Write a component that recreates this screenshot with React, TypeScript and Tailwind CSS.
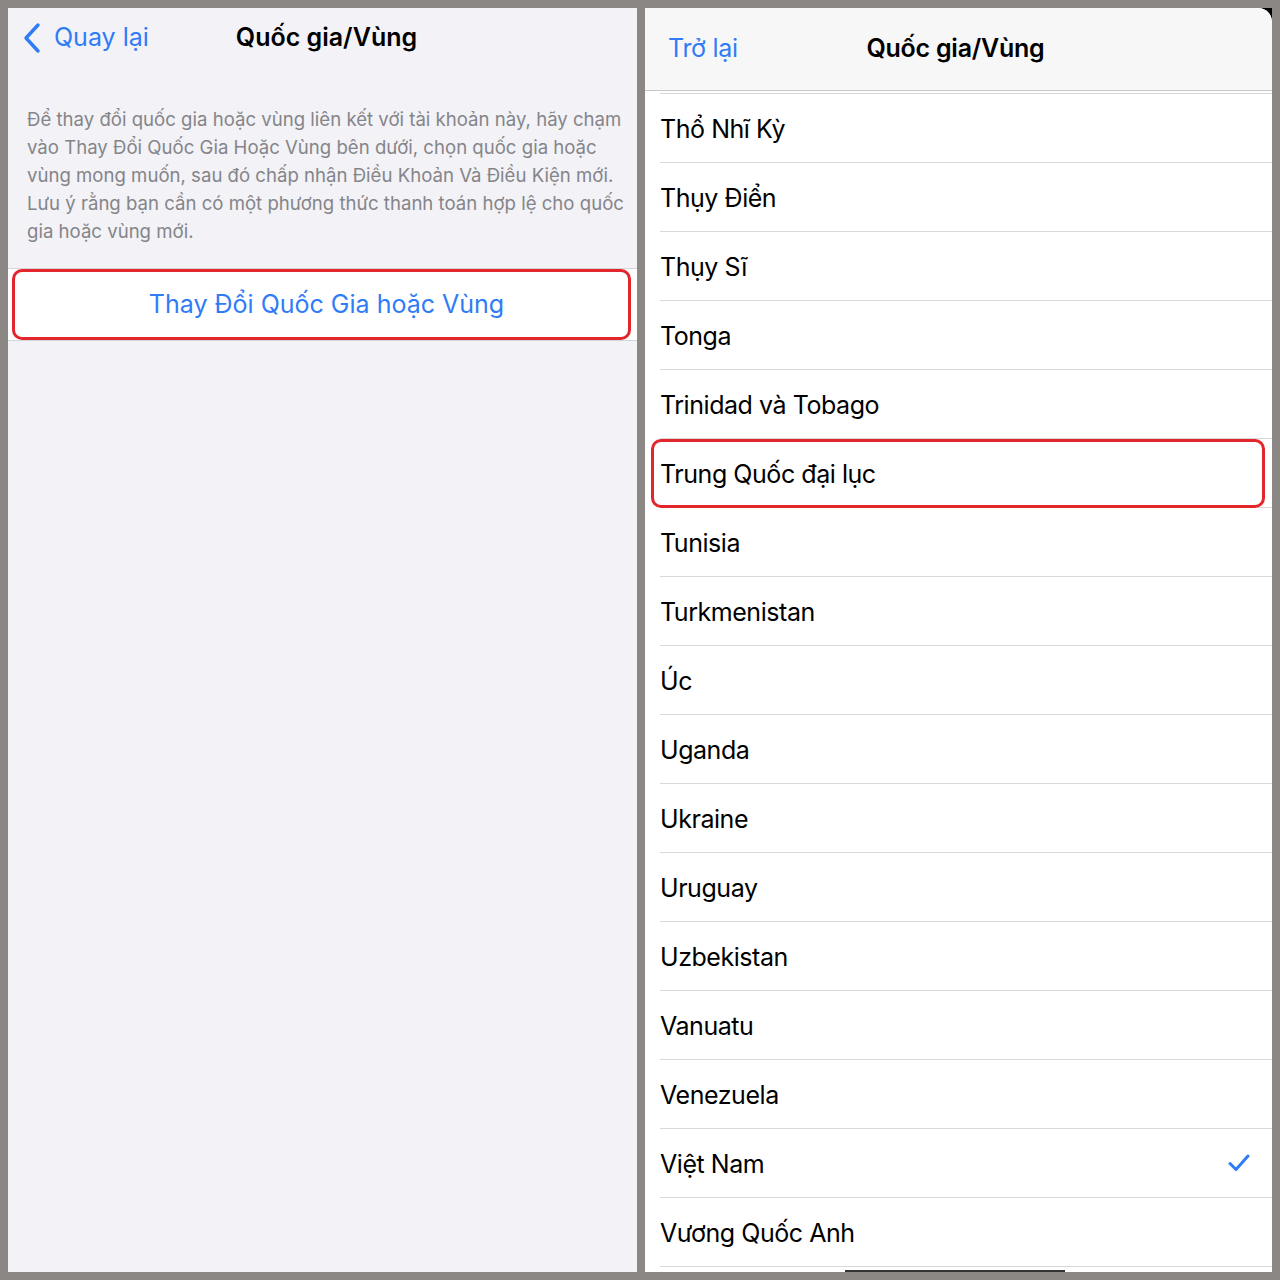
import React from "react";

const countries = [
  "Thổ Nhĩ Kỳ",
  "Thụy Điển",
  "Thụy Sĩ",
  "Tonga",
  "Trinidad và Tobago",
  "Trung Quốc đại lục",
  "Tunisia",
  "Turkmenistan",
  "Úc",
  "Uganda",
  "Ukraine",
  "Uruguay",
  "Uzbekistan",
  "Vanuatu",
  "Venezuela",
  "Việt Nam",
  "Vương Quốc Anh",
];

const font = { fontFamily: "Inter, 'Noto Sans', 'Liberation Sans', sans-serif" };

export default function App() {
  return (
    <div
      className="w-[1280px] h-[1280px] bg-[#8a8784] p-[8px] flex gap-[8px] overflow-hidden"
      style={font}
    >
      {/* Left panel */}
      <div className="w-[629px] h-[1264px] bg-[#f2f2f7] flex flex-col">
        <div className="h-[60px] flex items-center relative">
          <div className="flex items-center pl-[14px] gap-[10px] text-[#2f7cf6]">
            <svg width="22" height="32" viewBox="0 0 22 32" fill="none">
              <path d="M16 3 L4 16 L16 29" stroke="#2f7cf6" strokeWidth="3.4" strokeLinecap="round" strokeLinejoin="round" />
            </svg>
            <span className="text-[25px] tracking-[0px]">Quay lại</span>
          </div>
          <div className="absolute left-0 right-0 text-center pointer-events-none">
            <span className="text-[25px] font-semibold text-black tracking-[0px] pl-[8px]">Quốc gia/Vùng</span>
          </div>
        </div>
        <div className="pt-[37px] pl-[19px] pr-[4px] text-[18.6px] leading-[28px] text-[#858589]">
          <div className="whitespace-nowrap">Để thay đổi quốc gia hoặc vùng liên kết với tài khoản này, hãy chạm</div>
          <div className="whitespace-nowrap">vào Thay Đổi Quốc Gia Hoặc Vùng bên dưới, chọn quốc gia hoặc</div>
          <div className="whitespace-nowrap">vùng mong muốn, sau đó chấp nhận Điều Khoản Và Điều Kiện mới.</div>
          <div className="whitespace-nowrap">Lưu ý rằng bạn cần có một phương thức thanh toán hợp lệ cho quốc</div>
          <div className="whitespace-nowrap">gia hoặc vùng mới.</div>
        </div>
        <div className="mt-[23px] relative bg-white border-t border-b border-[#d6d6da] h-[73px] flex items-center justify-center">
          <span className="text-[25px] text-[#2f7cf6] tracking-[0px] pl-[8px] pt-[1px]">Thay Đổi Quốc Gia hoặc Vùng</span>
          <div className="absolute left-[4px] right-[6px] top-0 bottom-0 border-[3px] border-[#e3262b] rounded-[10px]" />
        </div>
      </div>

      {/* Right panel */}
      <div className="w-[627px] h-[1264px] bg-black">
        <div className="w-full h-full bg-white rounded-tr-[14px] overflow-hidden flex flex-col relative">
          <div className="h-[83px] shrink-0 bg-[#f7f7f7] border-b border-[#c8c8cc] flex items-center relative">
            <span className="pl-[23px] text-[25px] text-[#2f7cf6] tracking-[-0.3px]">Trở lại</span>
            <div className="absolute left-0 right-0 text-center">
              <span className="text-[25px] font-semibold text-black tracking-[-0.25px] pr-[6px]">Quốc gia/Vùng</span>
            </div>
          </div>
          <div className="mt-[2px] ml-[15px] border-t border-[#d8d8dc]" />
          {countries.map((c) => (
            <div key={c} className="relative h-[69px] shrink-0 flex items-center">
              <div className="ml-[15px] flex-1 h-full flex items-center border-b border-[#d8d8dc] pr-[22px]">
                <span className="flex-1 text-[25px] text-black tracking-[-0.45px] pt-[3px]">{c}</span>
                {c === "Việt Nam" && (
                  <svg width="22" height="18" viewBox="0 0 22 18" fill="none">
                    <path d="M2 9.5 L8 15.5 L20 2" stroke="#2f7cf6" strokeWidth="3" strokeLinecap="round" strokeLinejoin="round" />
                  </svg>
                )}
              </div>
              {c === "Trung Quốc đại lục" && (
                <div className="absolute left-[6px] right-[7px] top-0 bottom-0 border-[3px] border-[#e3262b] rounded-[10px]" />
              )}
            </div>
          ))}
          <div className="absolute bottom-0 left-[200px] w-[220px] h-[2px] bg-[#333]" />
        </div>
      </div>
    </div>
  );
}
